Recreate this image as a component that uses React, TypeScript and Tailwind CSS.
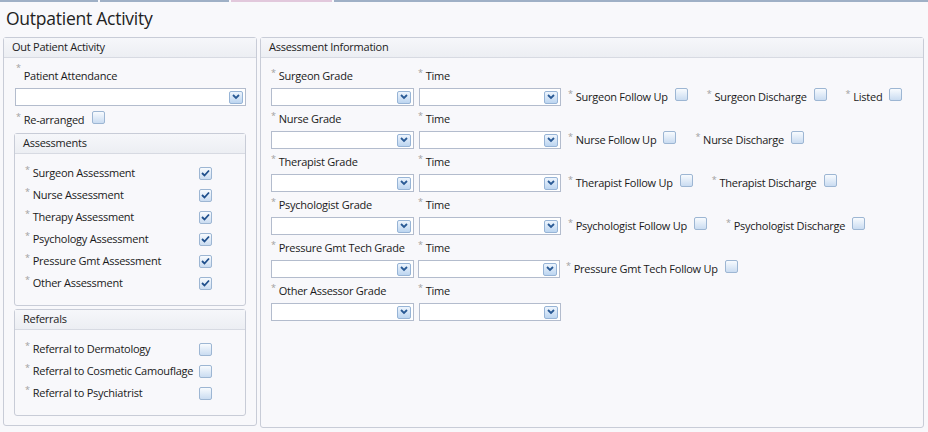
import React from "react";

const font = { fontFamily: '"Open Sans", "DejaVu Sans", sans-serif' };

function Star() {
  return <span className="relative -top-[4px] mr-[3px] text-[9px] leading-none text-[#a0a0a0]">*</span>;
}

function Check({ checked = false }: { checked?: boolean }) {
  return (
    <span className="inline-flex h-[13px] w-[13px] shrink-0 items-center justify-center rounded-[2px] border border-[#9db6d3] bg-gradient-to-b from-[#f8fbfe] to-[#cadcf1]">
      {checked && (
        <svg width="9" height="8" viewBox="0 0 9 8">
          <path d="M1 4 L3.5 6.5 L8 1.5" fill="none" stroke="#1f4f8c" strokeWidth="1.8" />
        </svg>
      )}
    </span>
  );
}

function Select({ w }: { w: string }) {
  return (
    <div className={`flex h-[18px] ${w} shrink-0 items-center justify-end border border-[#b3bccd] bg-white pr-[2px]`}>
      <span className="flex h-[13px] w-[14px] items-center justify-center rounded-[2px] border border-[#97b4d6] bg-gradient-to-b from-[#eef5fd] to-[#bcd5f0]">
        <svg width="8" height="6" viewBox="0 0 8 6">
          <path d="M1 1 L4 4 L7 1" fill="none" stroke="#2a5a95" strokeWidth="1.8" />
        </svg>
      </span>
    </div>
  );
}

function Header({ children }: { children: React.ReactNode }) {
  return (
    <div className="flex h-[20px] items-center border-b border-[#d7dae2] bg-gradient-to-b from-[#f6f7fa] to-[#eceef3] px-[8px] text-[11px] text-[#222]">
      {children}
    </div>
  );
}

const assessments = [
  "Surgeon Assessment",
  "Nurse Assessment",
  "Therapy Assessment",
  "Psychology Assessment",
  "Pressure Gmt Assessment",
  "Other Assessment",
];

const referrals = ["Referral to Dermatology", "Referral to Cosmetic Camouflage", "Referral to Psychiatrist"];

const rows: { grade: string; wide?: boolean; items: string[] }[] = [
  { grade: "Surgeon Grade", items: ["Surgeon Follow Up", "Surgeon Discharge", "Listed"] },
  { grade: "Nurse Grade", items: ["Nurse Follow Up", "Nurse Discharge"] },
  { grade: "Therapist Grade", items: ["Therapist Follow Up", "Therapist Discharge"] },
  { grade: "Psychologist Grade", items: ["Psychologist Follow Up", "Psychologist Discharge"] },
  { grade: "Pressure Gmt Tech Grade", wide: true, items: ["Pressure Gmt Tech Follow Up"] },
  { grade: "Other Assessor Grade", items: [] },
];

export default function App() {
  return (
    <div
      className="h-[432px] w-[928px] overflow-hidden bg-[#f8f8fb] text-[11px] tracking-[-0.25px] text-[#1a1a1a]"
      style={font}
    >
      <div className="flex h-[2px] gap-[2px]">
        <div className="w-[98px] border-b-2 border-[#9fb0c6]" />
        <div className="w-[129px] border-b-2 border-[#9fb0c6]" />
        <div className="w-[101px] border-b-2 border-[#e2c8dc]" />
        <div className="flex-1 border-b-2 border-[#9fb0c6]" />
      </div>
      <div className="flex h-[35px] items-center pl-[6px] pb-[2px] text-[17.5px] text-[#222]">Outpatient Activity</div>

      <div className="flex gap-[3px] pl-[3px]">
        {/* left panel */}
        <div className="flex h-[389px] w-[254px] flex-col rounded-[3px] border border-[#c8ccd7]">
          <Header>Out Patient Activity</Header>
          <div className="flex flex-col px-[10px] pt-[8px]">
            <div className="flex h-[22px] items-start pl-[2px] pt-[1px] leading-[18px]">
              <Star />
              Patient Attendance
            </div>
            <div className="pl-[1px]">
              <Select w="w-[231px]" />
            </div>
            <div className="flex h-[26px] items-center pl-[2px] pt-[2px] leading-[18px]">
              <Star />
              Re-arranged
              <span className="ml-[8px]">
                <Check />
              </span>
            </div>
            <div className="mt-[1px] flex h-[173px] flex-col rounded-[3px] border border-[#c8ccd7]">
              <Header>Assessments</Header>
              <div className="flex flex-col pl-[10px] pt-[8px]">
                {assessments.map((a) => (
                  <div key={a} className="grid h-[22px] grid-cols-[174px_13px] items-center leading-[18px]">
                    <span className="flex items-center">
                      <Star />
                      {a}
                    </span>
                    <Check checked />
                  </div>
                ))}
              </div>
            </div>
            <div className="mt-[3px] flex h-[107px] flex-col rounded-[3px] border border-[#c8ccd7]">
              <Header>Referrals</Header>
              <div className="flex flex-col pl-[10px] pt-[8px]">
                {referrals.map((a) => (
                  <div key={a} className="grid h-[22px] grid-cols-[174px_13px] items-center leading-[18px]">
                    <span className="flex items-center whitespace-nowrap">
                      <Star />
                      {a}
                    </span>
                    <Check />
                  </div>
                ))}
              </div>
            </div>
          </div>
        </div>

        {/* right panel */}
        <div className="flex h-[391px] w-[664px] flex-col rounded-[3px] border border-[#c8ccd7]">
          <Header>Assessment Information</Header>
          <div className="flex flex-col pl-[10px] pt-[8px]">
            {rows.map((r) => (
              <div key={r.grade} className="flex h-[43px] flex-col">
                <div className="flex h-[22px] items-start pt-[1px] leading-[18px]">
                  <span className="flex w-[147px] items-center whitespace-nowrap">
                    <Star />
                    {r.grade}
                  </span>
                  <span className="flex items-center">
                    <Star />
                    Time
                  </span>
                </div>
                <div className="flex items-center">
                  <Select w="w-[143px]" />
                  <span className={r.wide ? "w-[4px]" : "w-[5px]"} />
                  <Select w="w-[142px]" />
                  <div className={`flex items-center gap-[19px] ${r.wide ? "ml-[6px]" : "ml-[7px]"}`}>
                    {r.items.map((it) => (
                      <span key={it} className="flex items-center whitespace-nowrap leading-[18px]">
                        <Star />
                        {it}
                        <span className="ml-[7px]">
                          <Check />
                        </span>
                      </span>
                    ))}
                  </div>
                </div>
              </div>
            ))}
          </div>
        </div>
      </div>
    </div>
  );
}
